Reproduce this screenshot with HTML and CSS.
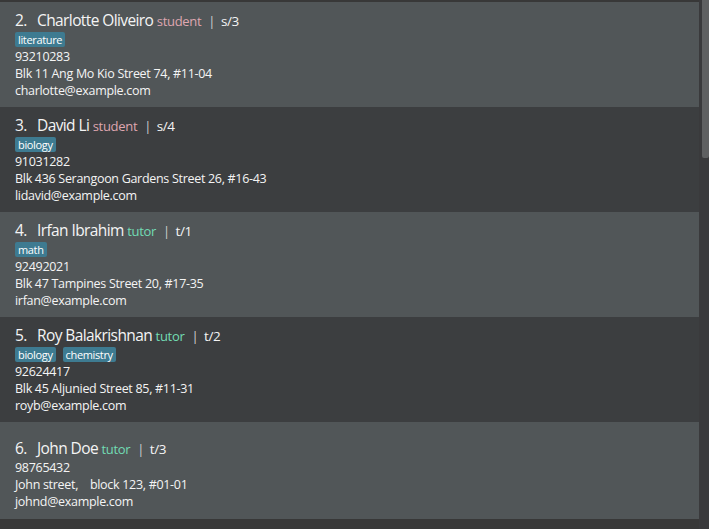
FILE: index.html
```html
<!DOCTYPE html>
<html>
<head>
<meta charset="utf-8">
<link rel="stylesheet" href="styles.css">
</head>
<body>
<div class="app">
  <div class="list">
    <div class="cell light">
      <div class="card">
        <div class="name"><span class="num">2.</span>Charlotte Oliveiro <span class="role student">student</span><span class="sep">|</span><span class="cls">s/3</span></div>
        <div class="tags"><span class="tag">literature</span></div>
        <div class="line">93210283</div>
        <div class="line">Blk 11 Ang Mo Kio Street 74, #11-04</div>
        <div class="line">charlotte@example.com</div>
      </div>
    </div>
    <div class="cell dark">
      <div class="card">
        <div class="name"><span class="num">3.</span>David Li <span class="role student">student</span><span class="sep">|</span><span class="cls">s/4</span></div>
        <div class="tags"><span class="tag">biology</span></div>
        <div class="line">91031282</div>
        <div class="line">Blk 436 Serangoon Gardens Street 26, #16-43</div>
        <div class="line">lidavid@example.com</div>
      </div>
    </div>
    <div class="cell light">
      <div class="card">
        <div class="name"><span class="num">4.</span>Irfan Ibrahim <span class="role tutor">tutor</span><span class="sep">|</span><span class="cls">t/1</span></div>
        <div class="tags"><span class="tag">math</span></div>
        <div class="line">92492021</div>
        <div class="line">Blk 47 Tampines Street 20, #17-35</div>
        <div class="line">irfan@example.com</div>
      </div>
    </div>
    <div class="cell dark">
      <div class="card">
        <div class="name"><span class="num">5.</span>Roy Balakrishnan <span class="role tutor">tutor</span><span class="sep">|</span><span class="cls">t/2</span></div>
        <div class="tags"><span class="tag">biology</span><span class="tag">chemistry</span></div>
        <div class="line">92624417</div>
        <div class="line">Blk 45 Aljunied Street 85, #11-31</div>
        <div class="line">royb@example.com</div>
      </div>
    </div>
    <div class="cell light">
      <div class="card">
        <div class="name"><span class="num">6.</span>John Doe <span class="role tutor">tutor</span><span class="sep">|</span><span class="cls">t/3</span></div>
        <div class="line">98765432</div>
        <div class="line">John street, &nbsp;&nbsp; block 123, #01-01</div>
        <div class="line">johnd@example.com</div>
      </div>
    </div>
  </div>
  <div class="scrollbar"><div class="thumb"></div></div>
</div>
</body>
</html>
```
FILE: styles.css
```css
html, body {
  margin: 0;
  padding: 0;
  background: #383838;
  width: 709px;
  height: 529px;
  overflow: hidden;
  font-family: "Open Sans", "Noto Sans", sans-serif;
  color: #ffffff;
}
.app {
  display: flex;
  height: 529px;
}
.list {
  width: 699px;
  height: 517px;
  margin-top: 2px;
  overflow: hidden;
  display: flex;
  flex-direction: column;
}
.cell {
  height: 105px;
  flex: 0 0 105px;
  display: flex;
  align-items: center;
  padding-left: 15px;
  box-sizing: border-box;
}
.light { background: #515658; }
.dark { background: #3c3e40; }
.card {
  display: flex;
  flex-direction: column;
}
.name {
  font-size: 15.5px;
  line-height: 19px;
  color: #f4f4f4;
  letter-spacing: -0.6px;
  white-space: pre;
}
.num {
  display: inline-block;
  width: 22px;
}
.role {
  font-size: 13px;
  letter-spacing: -0.3px;
}
.student { color: #dfa6b0; }
.tutor { color: #72dcb4; }
.sep {
  font-size: 13px;
  color: #d0d0d0;
  margin: 0 6px 0 7px;
}
.cls {
  font-size: 13.5px;
  color: #f4f4f4;
  letter-spacing: -0.4px;
}
.tags {
  display: flex;
  gap: 7px;
  margin: 1px 0 1px;
}
.tag {
  background: #3e7b91;
  color: #ffffff;
  font-size: 11px;
  line-height: 15px;
  padding: 0 3px;
  border-radius: 2px;
  letter-spacing: -0.35px;
}
.line {
  font-size: 12.5px;
  line-height: 17px;
  color: #f4f4f4;
  letter-spacing: -0.3px;
  white-space: pre;
}
.scrollbar {
  width: 10px;
  height: 529px;
  background: #3a3a3c;
  display: flex;
  justify-content: flex-end;
}
.thumb {
  width: 7px;
  height: 158px;
  background: #5f6061;
  border-radius: 0 0 2px 2px;
}
```
